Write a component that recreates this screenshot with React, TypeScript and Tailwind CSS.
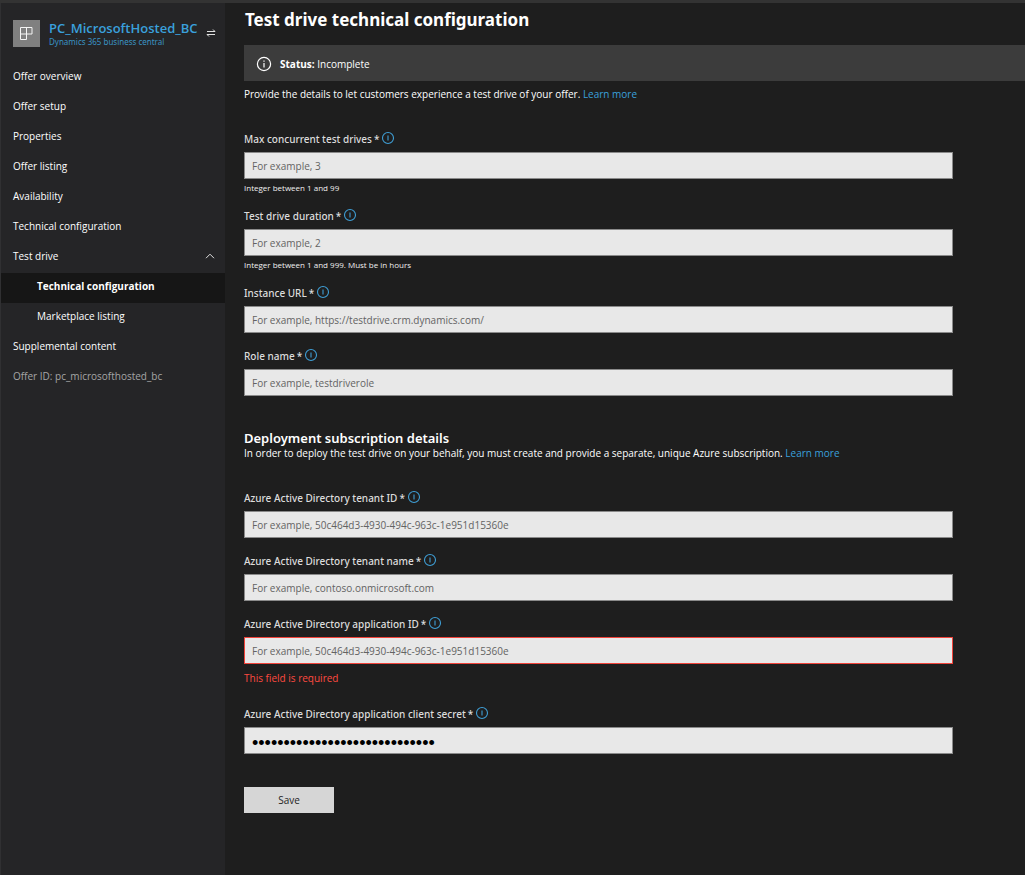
import { useId } from "react";

type FieldProps = {
  label: string;
  placeholder?: string;
  hint?: string;
  error?: string;
  type?: "text" | "password";
  defaultValue?: string;
};

function InfoIcon({ className }: { className: string }) {
  return (
    <svg viewBox="0 0 14 14" fill="none" stroke="currentColor" className={className} aria-hidden="true">
      <circle cx="7" cy="7" r="5.5" strokeWidth="1.1" />
      <path d="M7 4.4v5.2" strokeWidth="1.1" />
    </svg>
  );
}

function Field({ label, placeholder, hint, error, type = "text", defaultValue }: FieldProps) {
  const id = useId();
  return (
    <div className="mb-3">
      <div className="flex h-6 items-start gap-0.5">
        <label htmlFor={id} className="font-['Noto_Sans',sans-serif] leading-[22px] font-medium text-[#dcdcdc]">
          {label}
          <span className="pl-0.5">*</span>
        </label>
        <button type="button" aria-label={`About ${label}`} className="mt-[3px] text-[#3f9fd6]">
          <InfoIcon className="size-[14px]" />
        </button>
      </div>
      <input
        id={id}
        type={type}
        placeholder={placeholder}
        defaultValue={defaultValue}
        aria-invalid={error ? true : undefined}
        className={
          "block h-[27px] w-full border bg-[#e8e8e8] px-[7px] text-black placeholder:text-[#636363] " +
          (error ? "border-[#f0433a] " : "border-[#8a8a8a] ") +
          (type === "password" ? "pt-1 font-['Liberation_Sans',sans-serif] text-lg" : "text-[10px]")
        }
      />
      {hint && <p className="h-[14px] pt-[3px] text-[8px] leading-3 font-medium text-[#f0f0f0]">{hint}</p>}
      {error && <p className="h-[27px] pt-[5px] leading-[18px] text-[#ff4a40]">{error}</p>}
    </div>
  );
}

function NavItem({ label }: { label: string }) {
  return (
    <li>
      <a href="#" className="block pb-1 pl-3 text-white">
        {label}
      </a>
    </li>
  );
}

export default function App() {
  return (
    <div className="flex min-h-screen flex-col bg-[#1e1e1e] font-['Open_Sans','Noto_Sans',sans-serif] text-[10px] text-white">
      <div className="h-[3px] bg-[#333333]" />
      <div className="flex flex-1">
        <aside className="w-[225px] shrink-0 border-l border-[#303032] bg-[#252527]">
          <div className="flex items-start pt-[17px] pl-3">
            <div className="flex size-[27px] items-center justify-center bg-[#808080]">
              <svg viewBox="0 0 13 13" className="size-[13px]" fill="none" stroke="#f4f4f4" aria-hidden="true">
                <path d="M.5.5h11.5v6.5H6.5v5.5h-6zM6.5.5v6.5M.5 7h6" strokeWidth="1" />
              </svg>
            </div>
            <div className="ml-[9px] flex-1">
              <a href="#" className="block text-[13px] leading-4 font-semibold text-[#3aa0dc]">
                PC_MicrosoftHosted_BC
              </a>
              <p className="font-['Noto_Sans',sans-serif] text-[8px] leading-3 text-[#3a93c4]">
                Dynamics 365 business central
              </p>
            </div>
            <button type="button" aria-label="Switch offer" className="mt-2 mr-[9px]">
              <svg viewBox="0 0 10 10" className="size-[10px]" fill="none" stroke="#e0e0e0" aria-hidden="true">
                <path d="M1 3.5h8M7 1.5l2 2M9 6.5H1M3 8.5l-2-2" />
              </svg>
            </button>
          </div>
          <nav className="pt-[15px] leading-[26px]">
            <ul>
              <NavItem label="Offer overview" />
              <NavItem label="Offer setup" />
              <NavItem label="Properties" />
              <NavItem label="Offer listing" />
              <NavItem label="Availability" />
              <NavItem label="Technical configuration" />
              <li>
                <button
                  type="button"
                  aria-expanded="true"
                  className="flex w-full items-center justify-between pr-[10px] pb-1 pl-3"
                >
                  Test drive
                  <svg viewBox="0 0 10 10" className="size-[10px]" fill="none" stroke="#e0e0e0" aria-hidden="true">
                    <path d="M1 7.2l4-4 4 4" />
                  </svg>
                </button>
                <ul>
                  <li>
                    <a href="#" aria-current="page" className="block bg-[#161616] pb-1 pl-9 font-bold">
                      Technical configuration
                    </a>
                  </li>
                  <li>
                    <a href="#" className="block pb-1 pl-9">
                      Marketplace listing
                    </a>
                  </li>
                </ul>
              </li>
              <NavItem label="Supplemental content" />
            </ul>
            <p className="pl-3 text-[#a6a6a6]">Offer ID: pc_microsofthosted_bc</p>
          </nav>
        </aside>

        <main className="min-w-0 flex-1 pl-[19px]">
          <h1 className="pt-1 pl-px font-['Noto_Sans',sans-serif] text-[17px] leading-[26px] font-bold">
            Test drive technical configuration
          </h1>
          <div role="status" className="mt-3 flex h-9 items-center gap-2 bg-[#3c3c3c] pt-0.5 pl-3">
            <svg
              viewBox="0 0 16 16"
              className="size-4"
              fill="none"
              stroke="currentColor"
              strokeWidth="1.2"
              aria-hidden="true"
            >
              <circle cx="8" cy="8" r="6.6" />
              <path d="M8 7v4.5M8 4.4v1.3" />
            </svg>
            <p>
              <strong className="font-bold">Status:</strong> Incomplete
            </p>
          </div>
          <p className="pt-1 leading-[18px]">
            Provide the details to let customers experience a test drive of your offer.{" "}
            <a href="#" className="text-[#3aa0dc]">
              Learn more
            </a>
          </p>

          <form className="pr-[72px] pt-[25px]" onSubmit={(e) => e.preventDefault()}>
            <Field label="Max concurrent test drives" placeholder="For example, 3" hint="Integer between 1 and 99" />
            <Field
              label="Test drive duration"
              placeholder="For example, 2"
              hint="Integer between 1 and 999. Must be in hours"
            />
            <Field label="Instance URL" placeholder="For example, https://testdrive.crm.dynamics.com/" />
            <Field label="Role name" placeholder="For example, testdriverole" />

            <section className="pt-[22px]">
              <h2 className="font-['Noto_Sans',sans-serif] text-[13px] leading-4 font-semibold">
                Deployment subscription details
              </h2>
              <p className="mb-[26px] leading-[15px]">
                In order to deploy the test drive on your behalf, you must create and provide a separate, unique Azure
                subscription.{" "}
                <a href="#" className="text-[#3aa0dc]">
                  Learn more
                </a>
              </p>
              <Field
                label="Azure Active Directory tenant ID"
                placeholder="For example, 50c464d3-4930-494c-963c-1e951d15360e"
              />
              <Field label="Azure Active Directory tenant name" placeholder="For example, contoso.onmicrosoft.com" />
              <Field
                label="Azure Active Directory application ID"
                placeholder="For example, 50c464d3-4930-494c-963c-1e951d15360e"
                error="This field is required"
              />
              <Field
                label="Azure Active Directory application client secret"
                type="password"
                defaultValue="xxxxxxxxxxxxxxxxxxxxxxxxxxxxx"
              />
            </section>

            <button type="submit" className="mt-[21px] h-[26px] w-[90px] bg-[#d6d6d6] text-[#1e1e1e]">
              Save
            </button>
          </form>
        </main>
      </div>
    </div>
  );
}
